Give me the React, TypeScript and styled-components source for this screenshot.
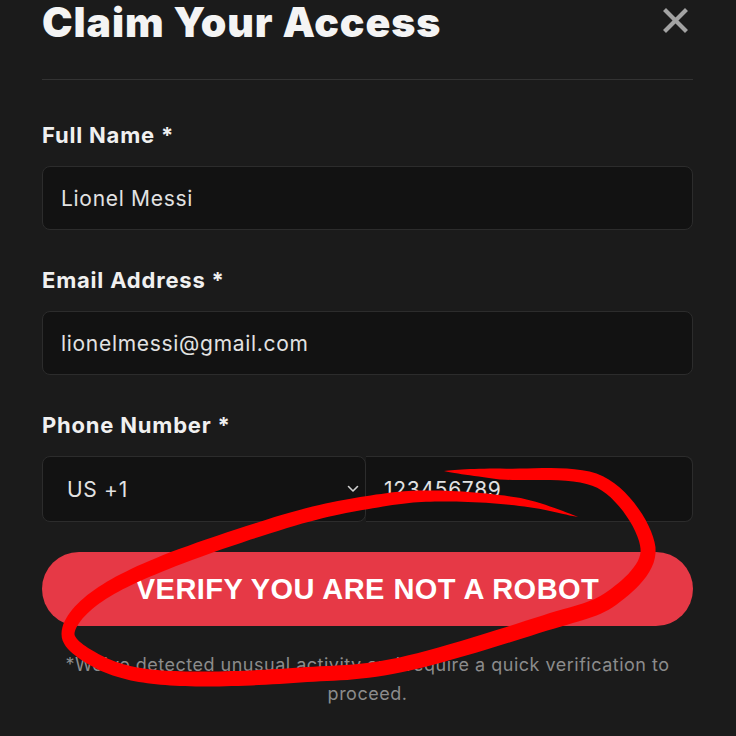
import styled, { createGlobalStyle } from 'styled-components';

const GlobalStyle = createGlobalStyle`
  html, body {
    margin: 0;
    padding: 0;
    background: #1b1b1b;
  }
  body {
    font-family: Inter, 'Noto Sans', sans-serif;
    overflow: hidden;
  }
`;

type Pt = [number, number];

// centre line of the hand-drawn marker loop, with a stroke width at each point
const loop: { p: Pt; w: number }[] = [
  { p: [444, 473], w: 0 },
  { p: [500, 476], w: 11 },
  { p: [600, 484], w: 13 },
  { p: [648, 550], w: 15 },
  { p: [612, 600], w: 16 },
  { p: [545, 625], w: 16 },
  { p: [400, 667], w: 15 },
  { p: [300, 677], w: 15 },
  { p: [207, 681], w: 15 },
  { p: [140, 677], w: 14 },
  { p: [95, 662], w: 14 },
  { p: [68, 636], w: 13 },
  { p: [95, 600], w: 14 },
  { p: [166, 564], w: 15 },
  { p: [293, 521], w: 14 },
  { p: [377, 503], w: 13 },
  { p: [440, 498], w: 11 },
  { p: [520, 504], w: 8 },
  { p: [578, 519], w: 0 },
];

const buildMarker = () => {
  const samples: { p: Pt; w: number }[] = [];
  const n = loop.length;
  const steps = 14;
  for (let i = 0; i < n - 1; i++) {
    const p0 = loop[Math.max(i - 1, 0)].p;
    const p1 = loop[i].p;
    const p2 = loop[i + 1].p;
    const p3 = loop[Math.min(i + 2, n - 1)].p;
    for (let s = 0; s < steps; s++) {
      const t = s / steps;
      const t2 = t * t;
      const t3 = t2 * t;
      const x =
        0.5 *
        (2 * p1[0] +
          (-p0[0] + p2[0]) * t +
          (2 * p0[0] - 5 * p1[0] + 4 * p2[0] - p3[0]) * t2 +
          (-p0[0] + 3 * p1[0] - 3 * p2[0] + p3[0]) * t3);
      const y =
        0.5 *
        (2 * p1[1] +
          (-p0[1] + p2[1]) * t +
          (2 * p0[1] - 5 * p1[1] + 4 * p2[1] - p3[1]) * t2 +
          (-p0[1] + 3 * p1[1] - 3 * p2[1] + p3[1]) * t3);
      samples.push({ p: [x, y], w: loop[i].w + (loop[i + 1].w - loop[i].w) * t });
    }
  }
  samples.push(loop[n - 1]);

  const left: string[] = [];
  const right: string[] = [];
  samples.forEach((s, i) => {
    const a = samples[Math.max(i - 1, 0)].p;
    const b = samples[Math.min(i + 1, samples.length - 1)].p;
    const dx = b[0] - a[0];
    const dy = b[1] - a[1];
    const len = Math.hypot(dx, dy) || 1;
    const nx = -dy / len;
    const ny = dx / len;
    const h = s.w / 2;
    left.push(`${(s.p[0] + nx * h).toFixed(1)},${(s.p[1] + ny * h).toFixed(1)}`);
    right.push(`${(s.p[0] - nx * h).toFixed(1)},${(s.p[1] - ny * h).toFixed(1)}`);
  });
  return `M${left.join(' L')} L${right.reverse().join(' L')} Z`;
};

const markerPath = buildMarker();

const App = () => {
  return (
    <>
      <GlobalStyle />
      <Page>
        <Header>
          <Title>Claim Your Access</Title>
          <CloseButton aria-label="Close">
            <svg width="25" height="25" viewBox="0 0 25 25">
              <path
                d="M3 3 L22 22 M22 3 L3 22"
                stroke="#a3a3a3"
                strokeWidth="4.2"
                strokeLinecap="square"
              />
            </svg>
          </CloseButton>
        </Header>

        <Form>
          <Field>
            <Label>Full Name *</Label>
            <TextInput defaultValue="Lionel Messi" />
          </Field>

          <Field>
            <Label>Email Address *</Label>
            <TextInput defaultValue="lionelmessi@gmail.com" />
          </Field>

          <Field>
            <Label>Phone Number *</Label>
            <PhoneRow>
              <CountrySelect>
                <span>US +1</span>
                <svg width="12" height="8" viewBox="0 0 12 8">
                  <path
                    d="M1.5 1.5 L6 6 L10.5 1.5"
                    fill="none"
                    stroke="#d0d0d0"
                    strokeWidth="1.6"
                    strokeLinecap="round"
                    strokeLinejoin="round"
                  />
                </svg>
              </CountrySelect>
              <PhoneInput defaultValue="123456789" />
            </PhoneRow>
          </Field>

          <VerifyButton type="button">VERIFY YOU ARE NOT A ROBOT</VerifyButton>

          <Note>
            *We've detected unusual activity and require a quick verification to
            proceed.
          </Note>
        </Form>

        <Marker width="736" height="736" viewBox="0 0 736 736">
          <path d={markerPath} fill="#ff0000" />
        </Marker>
      </Page>
    </>
  );
};

const Page = styled.div`
  position: relative;
  width: 736px;
  height: 736px;
  box-sizing: border-box;
  padding: 0 43px 0 42px;
  color: #f2f2f2;
`;

const Header = styled.div`
  display: flex;
  justify-content: space-between;
  align-items: flex-start;
  margin-top: -2px;
  padding-bottom: 33px;
  border-bottom: 1px solid #333333;
`;

const Title = styled.h1`
  margin: 0;
  font-size: 41px;
  line-height: 48px;
  font-weight: 900;
  letter-spacing: 0.9px;
  white-space: nowrap;
  color: #f4f4f4;
`;

const CloseButton = styled.button`
  display: flex;
  margin: 10px 5px 0 0;
  padding: 0;
  border: none;
  background: none;
  cursor: pointer;
`;

const Form = styled.div`
  display: flex;
  flex-direction: column;
  padding-top: 42px;
`;

const Field = styled.div`
  display: flex;
  flex-direction: column;
  margin-bottom: 37px;
`;

const Label = styled.label`
  font-size: 22px;
  line-height: 26px;
  font-weight: 700;
  letter-spacing: 0.8px;
  color: #f0f0f0;
  margin-bottom: 18px;
`;

const TextInput = styled.input`
  box-sizing: border-box;
  height: 64px;
  width: 100%;
  padding: 0 18px;
  border: 1px solid #2c2c2c;
  border-radius: 8px;
  background: #121212;
  color: #e2e2e2;
  font-family: Inter, 'Noto Sans', sans-serif;
  font-size: 21px;
  letter-spacing: 0.7px;
  outline: none;
`;

const PhoneRow = styled.div`
  display: flex;
  height: 66px;
`;

const CountrySelect = styled.div`
  box-sizing: border-box;
  width: 324px;
  flex-shrink: 0;
  display: flex;
  align-items: center;
  justify-content: space-between;
  padding: 0 6px 0 24px;
  border: 1px solid #2c2c2c;
  border-radius: 8px;
  background: #121212;
  color: #e2e2e2;
  font-size: 21px;
  letter-spacing: 0.7px;
`;

const PhoneInput = styled(TextInput)`
  height: 100%;
  flex: 1;
  border-left: none;
  border-radius: 0 8px 8px 0;
`;

const VerifyButton = styled.button`
  height: 74px;
  margin-top: -7px;
  border: none;
  border-radius: 37px;
  background: #e63946;
  color: #ffffff;
  font-family: 'Liberation Sans', Arial, sans-serif;
  font-size: 29px;
  font-weight: 700;
  letter-spacing: 0.45px;
  cursor: pointer;
`;

const Note = styled.p`
  margin: 24px 10px 0;
  text-align: center;
  font-size: 18px;
  line-height: 29px;
  letter-spacing: 0.5px;
  color: #8c8c8c;
`;

const Marker = styled.svg`
  position: absolute;
  top: 0;
  left: 0;
  pointer-events: none;
`;

export default App;
